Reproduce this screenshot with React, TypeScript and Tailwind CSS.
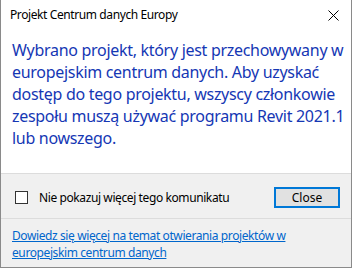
export default function App() {
  return (
    <div
      className="flex h-[268px] w-[352px] flex-col overflow-hidden border-x border-b border-[#8a8a8a] bg-white text-black"
      style={{ fontFamily: '"Noto Sans", "Open Sans", sans-serif' }}
    >
      <div className="flex h-[30px] shrink-0 items-center justify-between pl-[9px] pr-[12px]">
        <span className="text-[12px] tracking-[-0.4px]">Projekt Centrum danych Europy</span>
        <svg width="11" height="11" viewBox="0 0 11 11" className="text-black">
          <path d="M0.5 0.5 L10.5 10.5 M10.5 0.5 L0.5 10.5" stroke="currentColor" strokeWidth="1" />
        </svg>
      </div>

      <div className="h-[143px] shrink-0 whitespace-nowrap px-[11px] pt-[9px] text-[16px] leading-[22px] tracking-[-0.3px] text-[#1537b4]">
        Wybrano projekt, który jest przechowywany w
        <br />
        europejskim centrum danych. Aby uzyskać
        <br />
        dostęp do tego projektu, wszyscy członkowie
        <br />
        zespołu muszą używać programu Revit 2021.1
        <br />
        lub nowszego.
      </div>

      <div className="flex h-[46px] shrink-0 items-center justify-between border-y border-[#dcdcdc] bg-[#f0f0f0] pl-[14px] pr-[11px] pt-[3px]">
        <label className="flex items-center gap-[11px] text-[12px] tracking-[-0.4px]">
          <span className="h-[13px] w-[13px] border border-[#333] bg-white" />
          <span>Nie pokazuj więcej tego komunikatu</span>
        </label>
        <button className="flex h-[21px] w-[66px] items-center justify-center border-2 border-[#0078d7] bg-[#e1e1e1] text-[12px]">
          Close
        </button>
      </div>

      <div className="flex-1 bg-[#f0f0f0] px-[11px] pt-[8px] text-[12px] leading-[17px] tracking-[-0.4px]">
        <a className="whitespace-nowrap text-[#0066cc] underline">
          Dowiedz się więcej na temat otwierania projektów w
          <br />
          europejskim centrum danych
        </a>
      </div>
    </div>
  );
}
